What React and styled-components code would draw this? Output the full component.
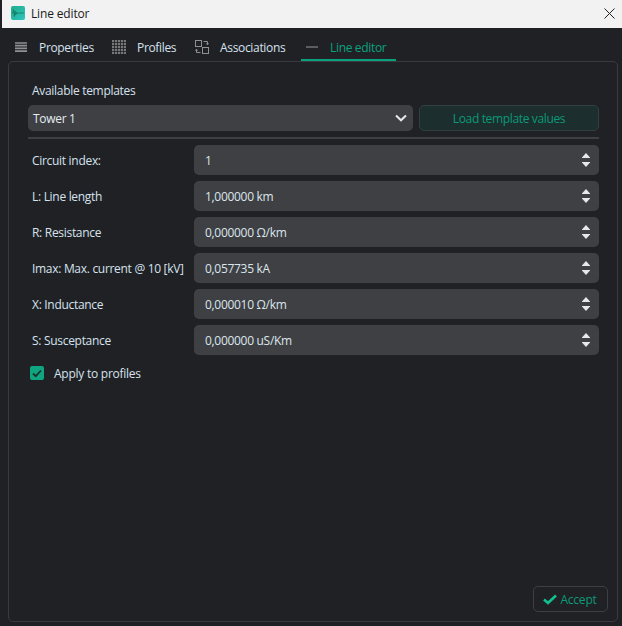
import React from "react";
import styled, { createGlobalStyle } from "styled-components";

const Global = createGlobalStyle`
  html, body { margin: 0; padding: 0; background: #202125; }
  body { font-family: "Open Sans", "Noto Sans", "Liberation Sans", sans-serif; font-size: 12px; }
  * { box-sizing: border-box; }
`;

const Window = styled.div`
  width: 622px;
  height: 626px;
  display: flex;
  flex-direction: column;
  background: #202125;
  padding-left: 2px;
  overflow: hidden;
`;

const TitleBar = styled.header`
  height: 28px;
  flex: none;
  background: #f2f2f2;
  display: flex;
  align-items: center;
  padding: 0 7px 2px 9px;
  color: #1a1a1a;
  font-size: 12px;
`;

const AppIcon = styled.svg`
  width: 14px;
  height: 14px;
  margin-right: 6px;
  flex: none;
`;

const TitleText = styled.span`
  flex: 1;
  letter-spacing: -0.15px;
`;

const Tabs = styled.nav`
  height: 33px;
  flex: none;
  display: flex;
  align-items: stretch;
  padding-left: 12px;
`;

const Tab = styled.div`
  display: flex;
  align-items: center;
  gap: ${(p) => p.$gap}px;
  width: ${(p) => p.$w}px;
  padding: 8px 0 0 ${(p) => p.$pad}px;
  font-size: 12px;
  letter-spacing: -0.33px;
  color: ${(p) => (p.$active ? "#0aa27e" : "#d6e2ee")};
  border-bottom: 2px solid ${(p) => (p.$active ? "#0aa27e" : "transparent")};
  height: 33px;
`;

const TabIcon = styled.svg`
  flex: none;
  display: block;
  margin-top: -2px;
`;

const Panel = styled.main`
  flex: none;
  width: 610px;
  height: 561px;
  margin-left: 6px;
  border: 1px solid #3a3b3f;
  border-radius: 5px;
  padding: 21px 18px 0 19px;
  display: flex;
  flex-direction: column;
  position: relative;
`;

const HeadLabel = styled.div`
  font-size: 12px;
  letter-spacing: -0.3px;
  color: #d6e2ee;
  height: 16px;
  line-height: 16px;
  padding-left: 4px;
  margin-bottom: 6px;
`;

const TemplateRow = styled.div`
  display: flex;
  gap: 6px;
  height: 26px;
`;

const Combo = styled.div`
  width: 385px;
  background: #3f4043;
  border-radius: 5px;
  display: flex;
  align-items: center;
  justify-content: space-between;
  padding: 0 6px 0 5px;
  color: #e4ecf2;
  letter-spacing: -0.3px;
`;

const LoadButton = styled.button`
  width: 180px;
  background: #1c2e2d;
  border: 1px solid #31403f;
  border-radius: 5px;
  color: #0a9a78;
  font: inherit;
  font-size: 12px;
  letter-spacing: -0.35px;
  padding: 0;
`;

const Divider = styled.hr`
  border: 0;
  height: 2px;
  background: #3e3f42;
  margin: 6px 0;
`;

const Fields = styled.div`
  display: flex;
  flex-direction: column;
  gap: 6px;
`;

const FieldRow = styled.div`
  display: grid;
  grid-template-columns: 166px 405px;
  height: 30px;
  align-items: center;
`;

const FieldLabel = styled.label`
  padding-left: 4px;
  color: #d6e2ee;
  letter-spacing: -0.3px;
  white-space: nowrap;
`;

const Spin = styled.div`
  height: 30px;
  background: #3f4043;
  border-radius: 5px;
  display: flex;
  align-items: center;
  justify-content: space-between;
  padding: 0 8px 0 11px;
  color: #dbe6ee;
  letter-spacing: -0.3px;
`;

const SpinArrows = styled.svg`
  width: 10px;
  height: 16px;
  flex: none;
`;

const CheckRow = styled.div`
  display: flex;
  align-items: center;
  gap: 10px;
  height: 16px;
  margin-top: 10px;
  color: #d6e2ee;
  letter-spacing: -0.25px;
`;

const CheckBox = styled.span`
  width: 14px;
  height: 14px;
  margin-left: 2px;
  border-radius: 2px;
  background: #0fa580;
  display: flex;
  align-items: center;
  justify-content: center;
`;

const AcceptButton = styled.button`
  position: absolute;
  right: 9px;
  bottom: 9px;
  width: 75px;
  height: 26px;
  background: transparent;
  border: 1px solid #3e3f43;
  border-radius: 5px;
  color: #0a9a78;
  font: inherit;
  font-size: 12px;
  letter-spacing: -0.2px;
  display: flex;
  align-items: center;
  justify-content: center;
  gap: 3px;
  padding: 0 1px 0 0;
`;

const fields = [
  ["Circuit index:", "1"],
  ["L: Line length", "1,000000 km"],
  ["R: Resistance", "0,000000 Ω/km"],
  ["Imax: Max. current @ 10 [kV]", "0,057735 kA"],
  ["X: Inductance", "0,000010 Ω/km"],
  ["S: Susceptance", "0,000000 uS/Km"],
];

const Arrows = () => (
  <SpinArrows viewBox="0 0 10 16">
    <path d="M5 1 L9 5.5 Q9.2 6 8.6 6 H1.4 Q0.8 6 1 5.5 Z" fill="#e8e8e8" />
    <path d="M5 15 L9 10.5 Q9.2 10 8.6 10 H1.4 Q0.8 10 1 10.5 Z" fill="#e8e8e8" />
  </SpinArrows>
);

export default function App() {
  return (
    <Window>
      <Global />
      <TitleBar>
        <AppIcon viewBox="0 0 14 14">
          <defs>
            <linearGradient id="g" x1="0" y1="0" x2="1" y2="1">
              <stop offset="0" stopColor="#1fae8a" />
              <stop offset="1" stopColor="#2fc4c0" />
            </linearGradient>
          </defs>
          <rect width="14" height="14" rx="2" fill="url(#g)" />
          <path d="M1 7 L2 7 L2.6 3.5 L3.3 10.5 L4 5 L4.6 9 L5.3 6 L6 8 L7 7 H13" stroke="#147a5e" strokeWidth="0.8" fill="none" />
        </AppIcon>
        <TitleText>Line editor</TitleText>
        <svg width="11" height="11" viewBox="0 0 11 11">
          <path d="M.5 .5 L10.5 10.5 M10.5 .5 L.5 10.5" stroke="#222" strokeWidth="1" />
        </svg>
      </TitleBar>
      <Tabs>
        <Tab $w={92} $pad={1} $gap={12}>
          <TabIcon width="12" height="10" viewBox="0 0 12 10">
            <path d="M0 1H12M0 3.7H12M0 6.4H12M0 9.1H12" stroke="#8f9092" strokeWidth="1.7" />
          </TabIcon>
          Properties
        </Tab>
        <Tab $w={80} $pad={6} $gap={11}>
          <TabIcon width="14" height="14" viewBox="0 0 14 14">
            {Array.from({ length: 25 }).map((_, i) => (
              <rect key={i} x={(i % 5) * 3} y={Math.floor(i / 5) * 3} width="2.2" height="2.2" fill="#77787a" />
            ))}
          </TabIcon>
          Profiles
        </Tab>
        <Tab $w={115} $pad={9} $gap={11}>
          <TabIcon width="14" height="14" viewBox="0 0 14 14" fill="none" stroke="#8f9092" strokeWidth="1">
            <rect x=".5" y=".5" width="6" height="6" />
            <rect x="7.5" y="7.5" width="6" height="6" />
            <path d="M8.5 1.5H12.5V4.5M11.3 3.4L12.5 4.8L13.7 3.4M5.5 12.5H1.5V9.5M.3 10.6L1.5 9.2L2.7 10.6" />
          </TabIcon>
          Associations
        </Tab>
        <Tab $active $w={95} $pad={5} $gap={12}>
          <TabIcon width="12" height="2" viewBox="0 0 12 2">
            <path d="M0 1H12" stroke="#9a9b9d" strokeWidth="1" />
          </TabIcon>
          Line editor
        </Tab>
      </Tabs>
      <Panel>
        <HeadLabel>Available templates</HeadLabel>
        <TemplateRow>
          <Combo>
            Tower 1
            <svg width="12" height="8" viewBox="0 0 12 8">
              <path d="M1 1.5 L6 6.3 L11 1.5" stroke="#e8e8e8" strokeWidth="2" fill="none" />
            </svg>
          </Combo>
          <LoadButton>Load template values</LoadButton>
        </TemplateRow>
        <Divider />
        <Fields>
          {fields.map(([l, v]) => (
            <FieldRow key={l}>
              <FieldLabel>{l}</FieldLabel>
              <Spin>
                {v}
                <Arrows />
              </Spin>
            </FieldRow>
          ))}
        </Fields>
        <CheckRow>
          <CheckBox>
            <svg width="10" height="9" viewBox="0 0 10 9">
              <path d="M1 4.5 L3.8 7.2 L9 1.5" stroke="#17322d" strokeWidth="1.8" fill="none" />
            </svg>
          </CheckBox>
          Apply to profiles
        </CheckRow>
        <AcceptButton>
          <svg width="14" height="11" viewBox="0 0 14 11">
            <path d="M1 5.5 L5 9 L13 1.5" stroke="#0fc090" strokeWidth="2.6" fill="none" />
          </svg>
          Accept
        </AcceptButton>
      </Panel>
    </Window>
  );
}
